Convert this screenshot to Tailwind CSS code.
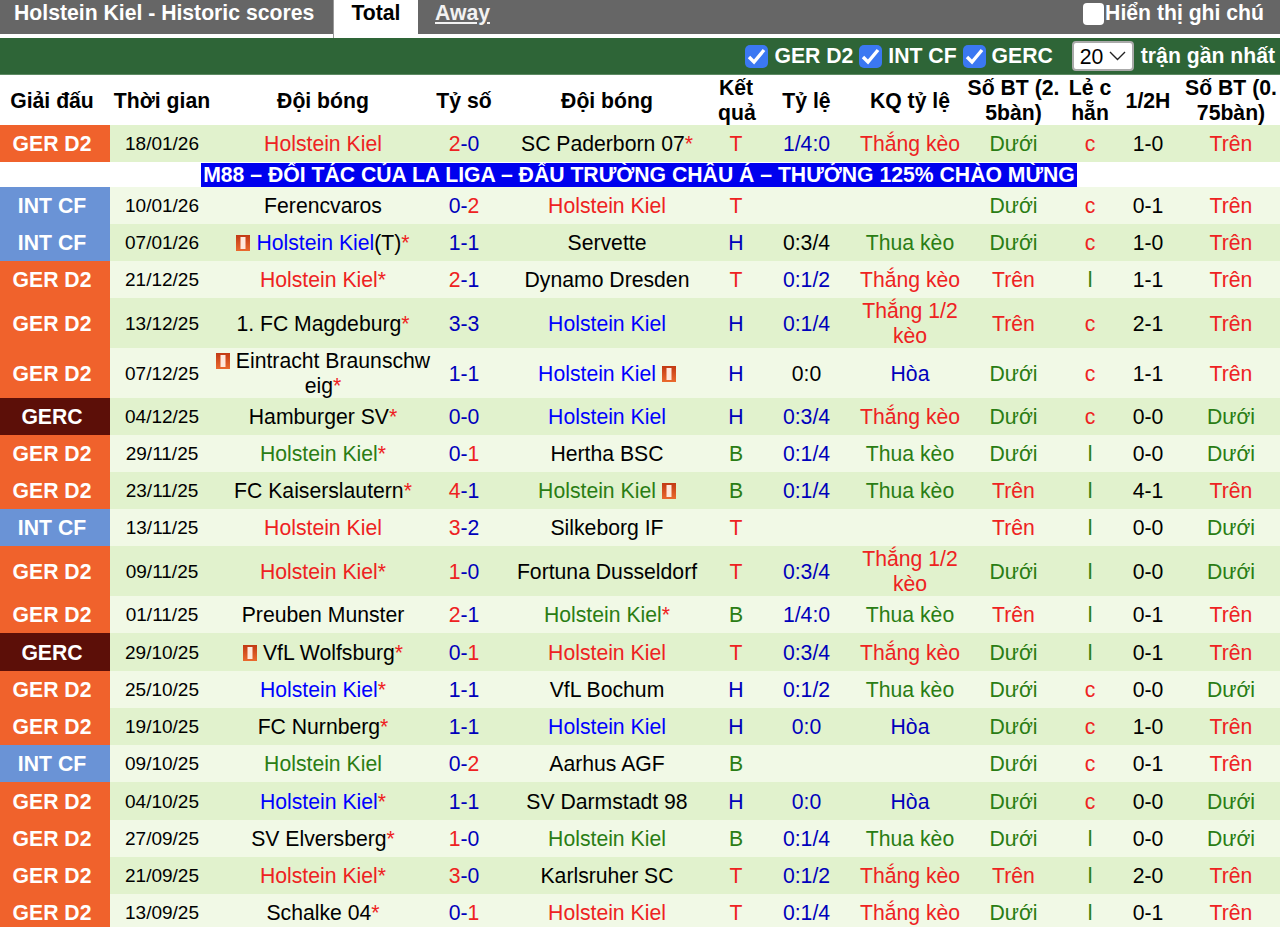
<!DOCTYPE html>
<html lang="vi">
<head>
<meta charset="utf-8">
<title>Holstein Kiel - Historic scores</title>
<script src="https://cdn.jsdelivr.net/npm/@tailwindcss/browser@4"></script>
</head>
<body class="bg-white overflow-hidden font-['Liberation_Sans',Arial,sans-serif] text-black">
<svg class="absolute w-0 h-0"><defs><linearGradient id="cardg" x1="0" y1="0" x2="0" y2="1"><stop offset="0" stop-color="#c23a14"/><stop offset="1" stop-color="#ea6a2e"/></linearGradient></defs></svg>
<div class="h-[927px] overflow-hidden">
<div class="flex h-[34px] bg-[#666666] text-white font-bold text-[21.2px] leading-[26px]">
  <div class="w-[333px] pl-[14px]">Holstein Kiel - Historic scores</div>
  <div class="w-[85px] h-[38px] bg-white text-black text-center border-l border-[#999]">Total</div>
  <div class="pl-[17px] underline text-[#f2f2f2]">Away</div>
  <label class="ml-auto pr-[16px] flex items-start"><input type="checkbox" class="w-[21px] h-[22px] mt-[3px] appearance-none bg-white rounded-[4px]"><span class="ml-[1px]">Hiển thị ghi chú</span></label>
</div>
<div class="h-[4px]"></div>
<div class="h-[37px] bg-[#2e6537] flex items-center justify-end text-white font-bold text-[21.2px] pr-[5px] border-b border-[#5d8a63]">
  <span class="w-[23px] h-[23px] rounded-[5px] bg-[#3b78f2] flex items-center justify-center"><svg width="19" height="17" viewBox="0 0 19 17"><path d="M2 9l5 5L17 2" fill="none" stroke="#fff" stroke-width="3.4"/></svg></span><span class="ml-[6px]">GER D2</span>
  <span class="ml-[6px] w-[23px] h-[23px] rounded-[5px] bg-[#3b78f2] flex items-center justify-center"><svg width="19" height="17" viewBox="0 0 19 17"><path d="M2 9l5 5L17 2" fill="none" stroke="#fff" stroke-width="3.4"/></svg></span><span class="ml-[6px]">INT CF</span>
  <span class="ml-[6px] w-[23px] h-[23px] rounded-[5px] bg-[#3b78f2] flex items-center justify-center"><svg width="19" height="17" viewBox="0 0 19 17"><path d="M2 9l5 5L17 2" fill="none" stroke="#fff" stroke-width="3.4"/></svg></span><span class="ml-[6px]">GERC</span>
  <div class="relative ml-[19px] w-[62px] h-[30px] bg-white rounded-[4px] border-2 border-[#aaa] text-black font-normal leading-[28px] pl-[6px]">20
    <svg class="absolute right-[6px] top-[8px]" width="17" height="10" viewBox="0 0 17 10"><path d="M1 1l7.5 7.5L16 1" fill="none" stroke="#222" stroke-width="1.4"/></svg>
  </div>
  <span class="ml-[7px]">trận gần nhất</span>
</div>
<table class="w-[1280px] table-fixed border-collapse text-center text-[21.2px] leading-[25px]">
<colgroup>
<col class="w-[110px]"><col class="w-[104px]"><col class="w-[218px]"><col class="w-[64px]"><col class="w-[222px]"><col class="w-[36px]"><col class="w-[105px]"><col class="w-[102px]"><col class="w-[105px]"><col class="w-[48px]"><col class="w-[68px]"><col class="w-[98px]">
</colgroup>
<thead>
<tr class="h-[49px] font-bold">
<th class="pr-[6px]">Giải đấu</th><th>Thời gian</th><th>Đội bóng</th><th>Tỷ số</th><th>Đội bóng</th><th class="px-0">Kết quả</th><th>Tỷ lệ</th><th>KQ tỷ lệ</th><th class="break-all px-[3px]">Số BT (2.5bàn)</th><th class="px-[1px]">Lẻ c hẵn</th><th>1/2H</th><th class="break-all">Số BT (0.75bàn)</th>
</tr>
</thead>
<tbody>
<tr class="h-[37px] bg-[#e1f2cd]">
<td class="bg-[#f0622c] text-white font-bold pr-[6px]">GER D2</td><td class="text-[19px]">18/01/26</td><td class="text-[#ee2222]">Holstein Kiel</td><td><span class="text-[#ee2222]">2</span><span class="text-[#0000bb]">-0</span></td><td>SC Paderborn 07<span class="text-[#ee2222]">*</span></td><td class="text-[#ee2222]">T</td><td class="text-[#0000bb]">1/4:0</td><td class="text-[#ee2222] whitespace-nowrap">Thắng kèo</td><td class="text-[#2a7d14]">Dưới</td><td class="text-[#ee2222]">c</td><td>1-0</td><td class="text-[#ee2222]">Trên</td>
</tr>
<tr class="h-[25px]">
<td colspan="12" class="p-0"><div class="w-[876px] ml-[201px] h-[24px] bg-[#0000ee] text-white font-bold leading-[24px] whitespace-nowrap">M88 – ĐỐI TÁC CỦA LA LIGA – ĐẤU TRƯỜNG CHÂU Á – THƯỞNG 125% CHÀO MỪNG</div></td>
</tr>
<tr class="h-[37px] bg-[#f1f9e6]">
<td class="bg-[#6a93d6] text-white font-bold pr-[6px]">INT CF</td><td class="text-[19px]">10/01/26</td><td>Ferencvaros</td><td><span class="text-[#0000bb]">0-</span><span class="text-[#ee2222]">2</span></td><td class="text-[#ee2222]">Holstein Kiel</td><td class="text-[#ee2222]">T</td><td></td><td></td><td class="text-[#2a7d14]">Dưới</td><td class="text-[#ee2222]">c</td><td>0-1</td><td class="text-[#ee2222]">Trên</td>
</tr>
<tr class="h-[37px] bg-[#e1f2cd]">
<td class="bg-[#6a93d6] text-white font-bold pr-[6px]">INT CF</td><td class="text-[19px]">07/01/26</td><td><svg class="inline-block align-[-1px] mr-[6px]" width="14" height="16" viewBox="0 0 14 16"><rect width="14" height="16" fill="url(#cardg)"/><rect x="4.5" y="2" width="5" height="12" fill="#ffe9dd"/></svg><span class="text-[#0000ff]">Holstein Kiel</span>(T)<span class="text-[#ee2222]">*</span></td><td class="text-[#0000bb]">1-1</td><td>Servette</td><td class="text-[#0000bb]">H</td><td>0:3/4</td><td class="text-[#2a7d14]">Thua kèo</td><td class="text-[#2a7d14]">Dưới</td><td class="text-[#ee2222]">c</td><td>1-0</td><td class="text-[#ee2222]">Trên</td>
</tr>
<tr class="h-[37px] bg-[#f1f9e6]">
<td class="bg-[#f0622c] text-white font-bold pr-[6px]">GER D2</td><td class="text-[19px]">21/12/25</td><td class="text-[#ee2222]">Holstein Kiel*</td><td><span class="text-[#ee2222]">2</span><span class="text-[#0000bb]">-1</span></td><td>Dynamo Dresden</td><td class="text-[#ee2222]">T</td><td class="text-[#0000bb]">0:1/2</td><td class="text-[#ee2222] whitespace-nowrap">Thắng kèo</td><td class="text-[#ee2222]">Trên</td><td class="text-[#2a7d14]">l</td><td>1-1</td><td class="text-[#ee2222]">Trên</td>
</tr>
<tr class="h-[50px] bg-[#e1f2cd]">
<td class="bg-[#f0622c] text-white font-bold pr-[6px]">GER D2</td><td class="text-[19px]">13/12/25</td><td>1. FC Magdeburg<span class="text-[#ee2222]">*</span></td><td class="text-[#0000bb]">3-3</td><td class="text-[#0000ff]">Holstein Kiel</td><td class="text-[#0000bb]">H</td><td class="text-[#0000bb]">0:1/4</td><td class="text-[#ee2222]">Thắng 1/2 kèo</td><td class="text-[#ee2222]">Trên</td><td class="text-[#ee2222]">c</td><td>2-1</td><td class="text-[#ee2222]">Trên</td>
</tr>
<tr class="h-[50px] bg-[#f1f9e6]">
<td class="bg-[#f0622c] text-white font-bold pr-[6px]">GER D2</td><td class="text-[19px]">07/12/25</td><td class="break-all"><svg class="inline-block align-[-1px] mr-[6px]" width="14" height="16" viewBox="0 0 14 16"><rect width="14" height="16" fill="url(#cardg)"/><rect x="4.5" y="2" width="5" height="12" fill="#ffe9dd"/></svg>Eintracht Braunschweig<span class="text-[#ee2222]">*</span></td><td class="text-[#0000bb]">1-1</td><td><span class="text-[#0000ff]">Holstein Kiel</span><svg class="inline-block align-[-1px] ml-[6px]" width="14" height="16" viewBox="0 0 14 16"><rect width="14" height="16" fill="url(#cardg)"/><rect x="4.5" y="2" width="5" height="12" fill="#ffe9dd"/></svg></td><td class="text-[#0000bb]">H</td><td>0:0</td><td class="text-[#0000bb]">Hòa</td><td class="text-[#2a7d14]">Dưới</td><td class="text-[#ee2222]">c</td><td>1-1</td><td class="text-[#ee2222]">Trên</td>
</tr>
<tr class="h-[37px] bg-[#e1f2cd]">
<td class="bg-[#5c0f08] text-white font-bold pr-[6px]">GERC</td><td class="text-[19px]">04/12/25</td><td>Hamburger SV<span class="text-[#ee2222]">*</span></td><td class="text-[#0000bb]">0-0</td><td class="text-[#0000ff]">Holstein Kiel</td><td class="text-[#0000bb]">H</td><td class="text-[#0000bb]">0:3/4</td><td class="text-[#ee2222] whitespace-nowrap">Thắng kèo</td><td class="text-[#2a7d14]">Dưới</td><td class="text-[#ee2222]">c</td><td>0-0</td><td class="text-[#2a7d14]">Dưới</td>
</tr>
<tr class="h-[37px] bg-[#f1f9e6]">
<td class="bg-[#f0622c] text-white font-bold pr-[6px]">GER D2</td><td class="text-[19px]">29/11/25</td><td class="text-[#2a7d14]">Holstein Kiel<span class="text-[#ee2222]">*</span></td><td><span class="text-[#0000bb]">0-</span><span class="text-[#ee2222]">1</span></td><td>Hertha BSC</td><td class="text-[#2a7d14]">B</td><td class="text-[#0000bb]">0:1/4</td><td class="text-[#2a7d14]">Thua kèo</td><td class="text-[#2a7d14]">Dưới</td><td class="text-[#2a7d14]">l</td><td>0-0</td><td class="text-[#2a7d14]">Dưới</td>
</tr>
<tr class="h-[37px] bg-[#e1f2cd]">
<td class="bg-[#f0622c] text-white font-bold pr-[6px]">GER D2</td><td class="text-[19px]">23/11/25</td><td>FC Kaiserslautern<span class="text-[#ee2222]">*</span></td><td><span class="text-[#ee2222]">4</span><span class="text-[#0000bb]">-1</span></td><td><span class="text-[#2a7d14]">Holstein Kiel</span><svg class="inline-block align-[-1px] ml-[6px]" width="14" height="16" viewBox="0 0 14 16"><rect width="14" height="16" fill="url(#cardg)"/><rect x="4.5" y="2" width="5" height="12" fill="#ffe9dd"/></svg></td><td class="text-[#2a7d14]">B</td><td class="text-[#0000bb]">0:1/4</td><td class="text-[#2a7d14]">Thua kèo</td><td class="text-[#ee2222]">Trên</td><td class="text-[#2a7d14]">l</td><td>4-1</td><td class="text-[#ee2222]">Trên</td>
</tr>
<tr class="h-[37px] bg-[#f1f9e6]">
<td class="bg-[#6a93d6] text-white font-bold pr-[6px]">INT CF</td><td class="text-[19px]">13/11/25</td><td class="text-[#ee2222]">Holstein Kiel</td><td><span class="text-[#ee2222]">3</span><span class="text-[#0000bb]">-2</span></td><td>Silkeborg IF</td><td class="text-[#ee2222]">T</td><td></td><td></td><td class="text-[#ee2222]">Trên</td><td class="text-[#2a7d14]">l</td><td>0-0</td><td class="text-[#2a7d14]">Dưới</td>
</tr>
<tr class="h-[50px] bg-[#e1f2cd]">
<td class="bg-[#f0622c] text-white font-bold pr-[6px]">GER D2</td><td class="text-[19px]">09/11/25</td><td class="text-[#ee2222]">Holstein Kiel*</td><td><span class="text-[#ee2222]">1</span><span class="text-[#0000bb]">-0</span></td><td>Fortuna Dusseldorf</td><td class="text-[#ee2222]">T</td><td class="text-[#0000bb]">0:3/4</td><td class="text-[#ee2222]">Thắng 1/2 kèo</td><td class="text-[#2a7d14]">Dưới</td><td class="text-[#2a7d14]">l</td><td>0-0</td><td class="text-[#2a7d14]">Dưới</td>
</tr>
<tr class="h-[37px] bg-[#f1f9e6]">
<td class="bg-[#f0622c] text-white font-bold pr-[6px]">GER D2</td><td class="text-[19px]">01/11/25</td><td>Preuben Munster</td><td><span class="text-[#ee2222]">2</span><span class="text-[#0000bb]">-1</span></td><td class="text-[#2a7d14]">Holstein Kiel<span class="text-[#ee2222]">*</span></td><td class="text-[#2a7d14]">B</td><td class="text-[#0000bb]">1/4:0</td><td class="text-[#2a7d14]">Thua kèo</td><td class="text-[#ee2222]">Trên</td><td class="text-[#2a7d14]">l</td><td>0-1</td><td class="text-[#ee2222]">Trên</td>
</tr>
<tr class="h-[38px] bg-[#e1f2cd]">
<td class="bg-[#5c0f08] text-white font-bold pr-[6px]">GERC</td><td class="text-[19px]">29/10/25</td><td><svg class="inline-block align-[-1px] mr-[6px]" width="14" height="16" viewBox="0 0 14 16"><rect width="14" height="16" fill="url(#cardg)"/><rect x="4.5" y="2" width="5" height="12" fill="#ffe9dd"/></svg>VfL Wolfsburg<span class="text-[#ee2222]">*</span></td><td><span class="text-[#0000bb]">0-</span><span class="text-[#ee2222]">1</span></td><td class="text-[#ee2222]">Holstein Kiel</td><td class="text-[#ee2222]">T</td><td class="text-[#0000bb]">0:3/4</td><td class="text-[#ee2222] whitespace-nowrap">Thắng kèo</td><td class="text-[#2a7d14]">Dưới</td><td class="text-[#2a7d14]">l</td><td>0-1</td><td class="text-[#ee2222]">Trên</td>
</tr>
<tr class="h-[37px] bg-[#f1f9e6]">
<td class="bg-[#f0622c] text-white font-bold pr-[6px]">GER D2</td><td class="text-[19px]">25/10/25</td><td class="text-[#0000ff]">Holstein Kiel<span class="text-[#ee2222]">*</span></td><td class="text-[#0000bb]">1-1</td><td>VfL Bochum</td><td class="text-[#0000bb]">H</td><td class="text-[#0000bb]">0:1/2</td><td class="text-[#2a7d14]">Thua kèo</td><td class="text-[#2a7d14]">Dưới</td><td class="text-[#ee2222]">c</td><td>0-0</td><td class="text-[#2a7d14]">Dưới</td>
</tr>
<tr class="h-[37px] bg-[#e1f2cd]">
<td class="bg-[#f0622c] text-white font-bold pr-[6px]">GER D2</td><td class="text-[19px]">19/10/25</td><td>FC Nurnberg<span class="text-[#ee2222]">*</span></td><td class="text-[#0000bb]">1-1</td><td class="text-[#0000ff]">Holstein Kiel</td><td class="text-[#0000bb]">H</td><td class="text-[#0000bb]">0:0</td><td class="text-[#0000bb]">Hòa</td><td class="text-[#2a7d14]">Dưới</td><td class="text-[#ee2222]">c</td><td>1-0</td><td class="text-[#ee2222]">Trên</td>
</tr>
<tr class="h-[37px] bg-[#f1f9e6]">
<td class="bg-[#6a93d6] text-white font-bold pr-[6px]">INT CF</td><td class="text-[19px]">09/10/25</td><td class="text-[#2a7d14]">Holstein Kiel</td><td><span class="text-[#0000bb]">0-</span><span class="text-[#ee2222]">2</span></td><td>Aarhus AGF</td><td class="text-[#2a7d14]">B</td><td></td><td></td><td class="text-[#2a7d14]">Dưới</td><td class="text-[#ee2222]">c</td><td>0-1</td><td class="text-[#ee2222]">Trên</td>
</tr>
<tr class="h-[38px] bg-[#e1f2cd]">
<td class="bg-[#f0622c] text-white font-bold pr-[6px]">GER D2</td><td class="text-[19px]">04/10/25</td><td class="text-[#0000ff]">Holstein Kiel<span class="text-[#ee2222]">*</span></td><td class="text-[#0000bb]">1-1</td><td>SV Darmstadt 98</td><td class="text-[#0000bb]">H</td><td class="text-[#0000bb]">0:0</td><td class="text-[#0000bb]">Hòa</td><td class="text-[#2a7d14]">Dưới</td><td class="text-[#ee2222]">c</td><td>0-0</td><td class="text-[#2a7d14]">Dưới</td>
</tr>
<tr class="h-[37px] bg-[#f1f9e6]">
<td class="bg-[#f0622c] text-white font-bold pr-[6px]">GER D2</td><td class="text-[19px]">27/09/25</td><td>SV Elversberg<span class="text-[#ee2222]">*</span></td><td><span class="text-[#ee2222]">1</span><span class="text-[#0000bb]">-0</span></td><td class="text-[#2a7d14]">Holstein Kiel</td><td class="text-[#2a7d14]">B</td><td class="text-[#0000bb]">0:1/4</td><td class="text-[#2a7d14]">Thua kèo</td><td class="text-[#2a7d14]">Dưới</td><td class="text-[#2a7d14]">l</td><td>0-0</td><td class="text-[#2a7d14]">Dưới</td>
</tr>
<tr class="h-[37px] bg-[#e1f2cd]">
<td class="bg-[#f0622c] text-white font-bold pr-[6px]">GER D2</td><td class="text-[19px]">21/09/25</td><td class="text-[#ee2222]">Holstein Kiel*</td><td><span class="text-[#ee2222]">3</span><span class="text-[#0000bb]">-0</span></td><td>Karlsruher SC</td><td class="text-[#ee2222]">T</td><td class="text-[#0000bb]">0:1/2</td><td class="text-[#ee2222] whitespace-nowrap">Thắng kèo</td><td class="text-[#ee2222]">Trên</td><td class="text-[#2a7d14]">l</td><td>2-0</td><td class="text-[#ee2222]">Trên</td>
</tr>
<tr class="h-[37px] bg-[#f1f9e6]">
<td class="bg-[#f0622c] text-white font-bold pr-[6px]">GER D2</td><td class="text-[19px]">13/09/25</td><td>Schalke 04<span class="text-[#ee2222]">*</span></td><td><span class="text-[#0000bb]">0-</span><span class="text-[#ee2222]">1</span></td><td class="text-[#ee2222]">Holstein Kiel</td><td class="text-[#ee2222]">T</td><td class="text-[#0000bb]">0:1/4</td><td class="text-[#ee2222] whitespace-nowrap">Thắng kèo</td><td class="text-[#2a7d14]">Dưới</td><td class="text-[#2a7d14]">l</td><td>0-1</td><td class="text-[#ee2222]">Trên</td>
</tr>
</tbody>
</table>
</div>
</body>
</html>
